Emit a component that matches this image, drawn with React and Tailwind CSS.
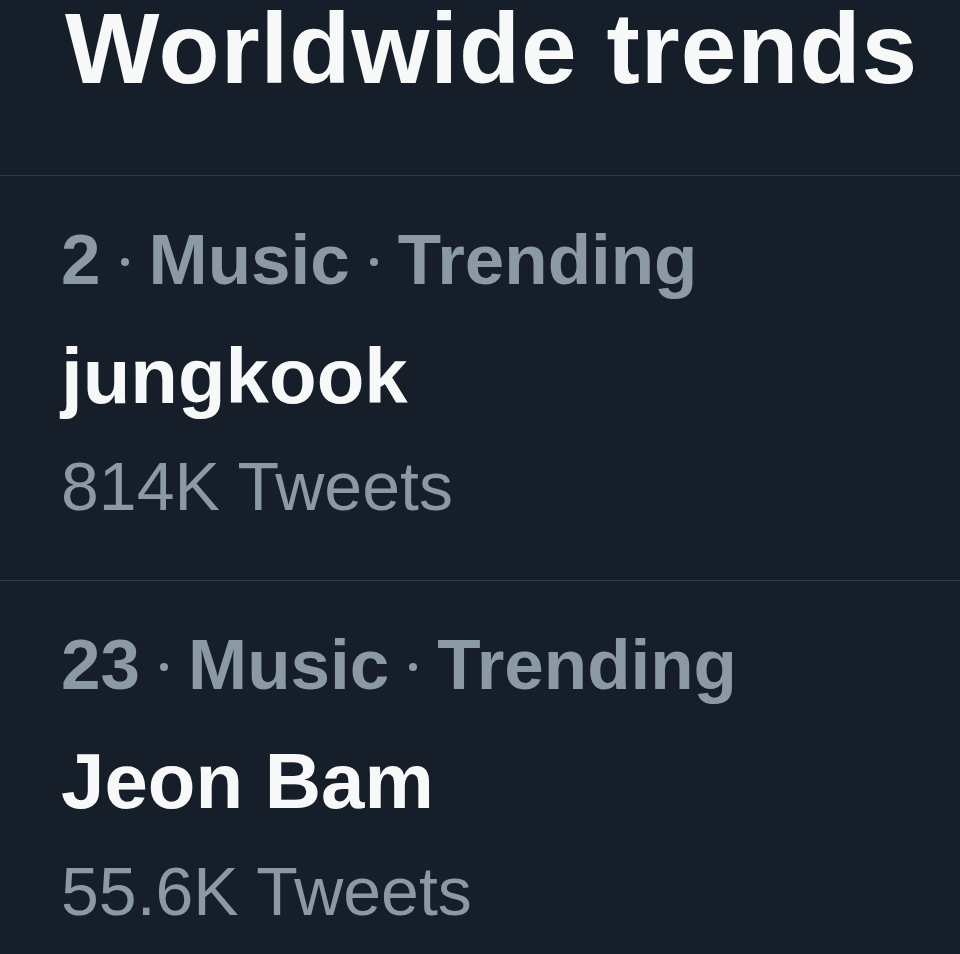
const trends = [
  { rank: 2, category: "Music", name: "jungkook", count: "814K Tweets" },
  { rank: 23, category: "Music", name: "Jeon Bam", count: "55.6K Tweets" },
];

// twitter uses a round middle dot, liberation draws a square one
const Dot = () => (
  <span className="inline-block w-[8px] h-[8px] rounded-full bg-current mx-[20px] mb-[6px] align-middle" />
);

const TrendItem = ({ trend }) => {
  return (
    <div className="flex flex-col px-[61px] pt-[44px] pb-[54px] border-b border-[#2f3a45]">
      <p className="text-[71px] leading-[80px] font-bold text-[#8b98a5] whitespace-nowrap">
        {trend.rank}
        <Dot />
        {trend.category}
        <Dot />
        Trending
      </p>
      <p className="mt-[31px] text-[78px] leading-[90px] font-bold text-[#f7f9f9]">
        {trend.name}
      </p>
      <p className="mt-[25px] text-[68px] leading-[80px] text-[#8b98a5]">
        {trend.count}
      </p>
    </div>
  );
};

const App = () => {
  return (
    <div
      className="w-[960px] h-[954px] overflow-hidden bg-[#161e29]"
      style={{ fontFamily: '"Liberation Sans", Arial, sans-serif' }}
    >
      <div className="pl-[65px] pb-[79px] border-b border-[#2f3a45]">
        <h1 className="text-[100px] leading-[96px] font-bold text-[#f7f9f9] tracking-[1px] whitespace-nowrap">
          Worldwide trends
        </h1>
      </div>
      {trends.map((t) => (
        <TrendItem key={t.rank} trend={t} />
      ))}
    </div>
  );
};

export default App;
